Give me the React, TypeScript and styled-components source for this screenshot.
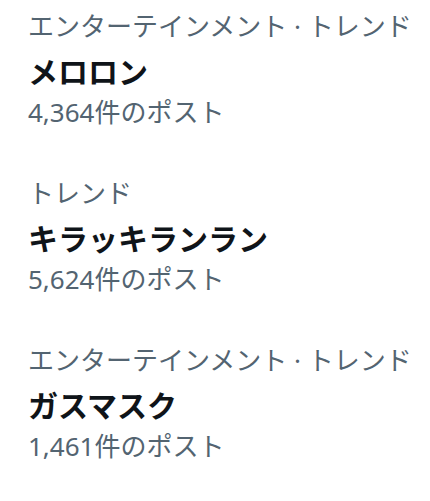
import React from "react";
import styled, { createGlobalStyle } from "styled-components";

const GlobalStyle = createGlobalStyle`
  html, body {
    margin: 0;
    padding: 0;
    background: #ffffff;
  }
  body {
    font-family: "Noto Sans", "Noto Sans CJK JP", sans-serif;
  }
`;

type Trend = {
  category: string;
  name: string;
  posts: string;
};

const trends: Trend[] = [
  { category: "エンターテインメント · トレンド", name: "メロロン", posts: "4,364件のポスト" },
  { category: "トレンド", name: "キラッキランラン", posts: "5,624件のポスト" },
  { category: "エンターテインメント · トレンド", name: "ガスマスク", posts: "1,461件のポスト" },
];

const List = styled.div`
  display: flex;
  flex-direction: column;
  gap: 47px;
  padding: 8px 0 0 28px;
  width: 430px;
  height: 501px;
  box-sizing: border-box;
  overflow: hidden;
`;

const Item = styled.div`
  display: flex;
  flex-direction: column;
`;

const Category = styled.div`
  font-size: 26px;
  line-height: 36px;
  color: #536471;
  white-space: nowrap;
`;

const Name = styled.div`
  font-family: "Noto Sans CJK JP", sans-serif;
  font-size: 30px;
  font-weight: 700;
  line-height: 52px;
  color: #0f1419;
  white-space: nowrap;
`;

const Posts = styled.div`
  font-size: 26px;
  line-height: 32px;
  color: #536471;
  white-space: nowrap;
`;

const App = () => {
  return (
    <>
      <GlobalStyle />
      <List>
        {trends.map((t) => (
          <Item key={t.name}>
            <Category>{t.category}</Category>
            <Name>{t.name}</Name>
            <Posts>{t.posts}</Posts>
          </Item>
        ))}
      </List>
    </>
  );
};

export default App;
